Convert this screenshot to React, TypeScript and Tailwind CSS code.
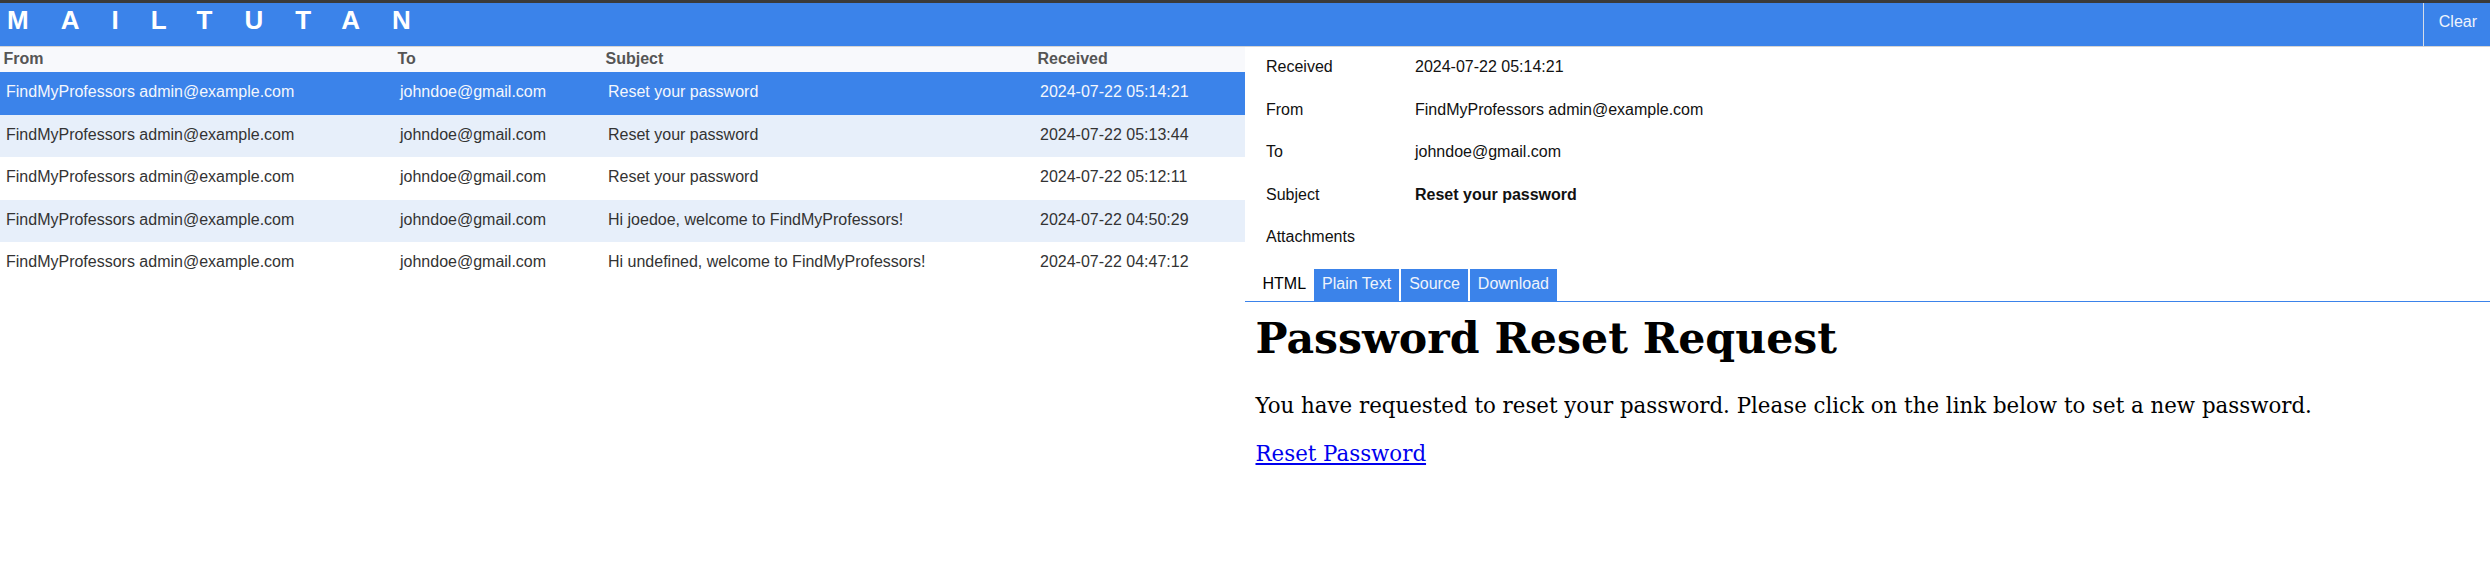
import React from "react";

const rows = [
  { from: "FindMyProfessors admin@example.com", to: "johndoe@gmail.com", subject: "Reset your password", received: "2024-07-22 05:14:21" },
  { from: "FindMyProfessors admin@example.com", to: "johndoe@gmail.com", subject: "Reset your password", received: "2024-07-22 05:13:44" },
  { from: "FindMyProfessors admin@example.com", to: "johndoe@gmail.com", subject: "Reset your password", received: "2024-07-22 05:12:11" },
  { from: "FindMyProfessors admin@example.com", to: "johndoe@gmail.com", subject: "Hi joedoe, welcome to FindMyProfessors!", received: "2024-07-22 04:50:29" },
  { from: "FindMyProfessors admin@example.com", to: "johndoe@gmail.com", subject: "Hi undefined, welcome to FindMyProfessors!", received: "2024-07-22 04:47:12" },
];

const details: { label: string; value: string; bold?: boolean }[] = [
  { label: "Received", value: "2024-07-22 05:14:21" },
  { label: "From", value: "FindMyProfessors admin@example.com" },
  { label: "To", value: "johndoe@gmail.com" },
  { label: "Subject", value: "Reset your password", bold: true },
  { label: "Attachments", value: "" },
];

export default function App() {
  return (
    <div className="w-[2490px] h-[588px] bg-white flex flex-col overflow-hidden font-['Liberation_Sans',Arial,sans-serif]">
      <header className="flex h-[47px] shrink-0 border-t-[3px] border-b border-t-[#3a3a3a] border-b-[#d4d4d4] bg-[#3b83ea]">
        <div className="flex-1 pl-[7px] pt-[3px] text-[26px] leading-[29px] font-bold text-white tracking-[32px]">
          MAILTUTAN
        </div>
        <div className="border-l border-[#d6dde8] pl-[15px] pr-[13px] pt-[10px] text-[16px] leading-[18px] text-[#eef3fc]">
          Clear
        </div>
      </header>
      <div className="flex flex-1">
        <div className="w-[1245px] shrink-0">
          <div className="grid grid-cols-[394px_208px_432px_211px] h-[25px] bg-[#f8f9fc] text-[#555] font-bold text-[16px] leading-[18px]">
            <div className="pl-[3.5px] pt-[3px]">From</div>
            <div className="pl-[3.5px] pt-[3px]">To</div>
            <div className="pl-[3.5px] pt-[3px]">Subject</div>
            <div className="pl-[3.5px] pt-[3px]">Received</div>
          </div>
          {rows.map((r, i) => {
            const bg = i === 0 ? "bg-[#3b83ea] text-[#f4f7fd]" : i % 2 === 1 ? "bg-[#e7effa] text-[#333]" : "bg-white text-[#333]";
            return (
              <div key={i} className={`grid grid-cols-[394px_208px_432px_211px] h-[42.5px] text-[16px] leading-[18px] whitespace-nowrap ${bg}`}>
                <div className="pl-[6px] pt-[11px]">{r.from}</div>
                <div className="pl-[6px] pt-[11px]">{r.to}</div>
                <div className="pl-[6px] pt-[11px]">{r.subject}</div>
                <div className="pl-[6px] pt-[11px]">{r.received}</div>
              </div>
            );
          })}
        </div>
        <div className="flex-1 flex flex-col">
          <div className="flex flex-col">
            {details.map((d) => (
              <div key={d.label} className="grid grid-cols-[149px_1fr] h-[42.5px] pl-[21px] pt-[11px] text-[16px] leading-[18px] text-[#111]">
                <div>{d.label}</div>
                <div className={d.bold ? "font-bold" : ""}>{d.value}</div>
              </div>
            ))}
          </div>
          <div className="flex mt-[9.5px] pl-[9.5px] border-b border-[#3b83ea] text-[16px] leading-[18px]">
            <div className="h-[32px] px-[8px] pt-[6px] bg-white text-black">HTML</div>
            <div className="h-[32px] px-[8px] pt-[6px] bg-[#3b83ea] text-[#eef3fc]">Plain Text</div>
            <div className="h-[32px] px-[8px] pt-[6px] ml-[2px] bg-[#3b83ea] text-[#eef3fc]">Source</div>
            <div className="h-[32px] px-[8px] pt-[6px] ml-[2px] bg-[#3b83ea] text-[#eef3fc]">Download</div>
          </div>
          <div className="pl-[10.5px] pt-[10.7px] font-['DejaVu_Serif',serif] text-black">
            <h1 className="text-[42.67px] leading-[51px] font-bold">Password Reset Request</h1>
            <p className="mt-[27px] text-[21.33px] leading-[30px]">
              You have requested to reset your password. Please click on the link below to set a new password.
            </p>
            <p className="mt-[18.6px] text-[21.33px] leading-[30px]">
              <a href="#" className="text-[#0000ee] underline">Reset Password</a>
            </p>
          </div>
        </div>
      </div>
    </div>
  );
}
